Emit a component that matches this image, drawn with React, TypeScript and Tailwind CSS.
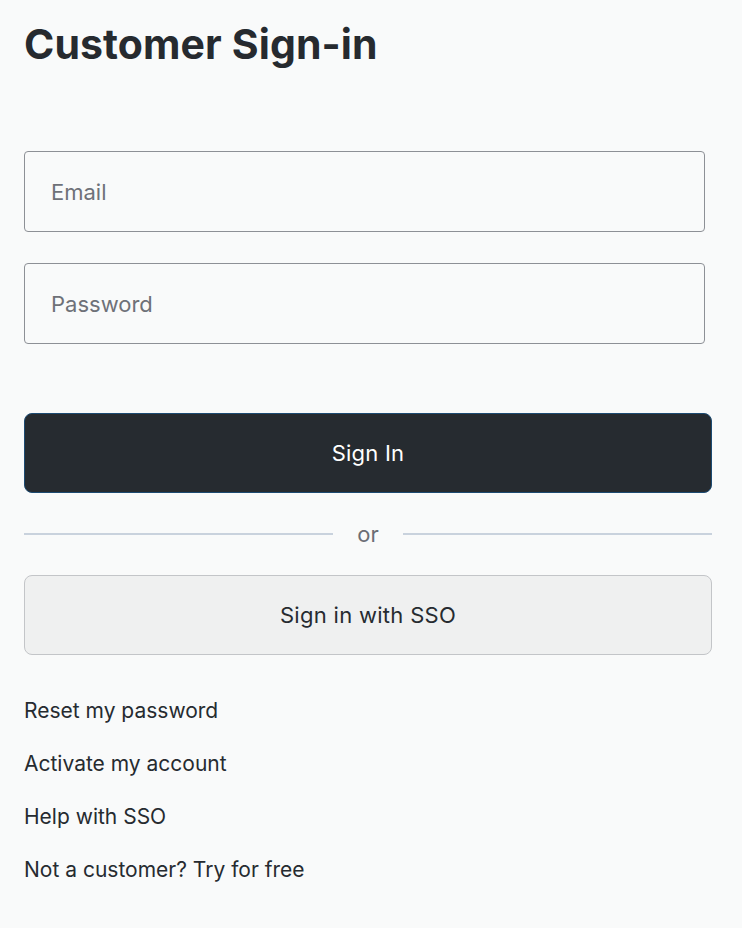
export default function App() {
  const links = [
    "Reset my password",
    "Activate my account",
    "Help with SSO",
    "Not a customer? Try for free",
  ];

  return (
    <div
      className="min-h-[928px] bg-[#f9fafa] px-6 pt-[17px] text-[#262b30]"
      style={{ fontFamily: "Inter, 'Noto Sans', sans-serif" }}
    >
      <h1 className="text-[41px] font-bold leading-[54px] tracking-[0.1px] text-[#262a2f]">
        Customer Sign-in
      </h1>

      <form className="mt-[80px] flex flex-col" onSubmit={(e) => e.preventDefault()}>
        <input
          type="email"
          placeholder="Email"
          className="h-[81px] w-[681px] rounded-[4px] border border-[#8d9096] bg-[#f9fafa] px-[26px] text-[22px] text-[#262b30] placeholder:text-[#6e7178] outline-none"
        />
        <input
          type="password"
          placeholder="Password"
          className="mt-[31px] h-[81px] w-[681px] rounded-[4px] border border-[#8d9096] bg-[#f9fafa] px-[26px] text-[22px] text-[#262b30] placeholder:text-[#6e7178] outline-none"
        />

        <button
          type="submit"
          className="mt-[69px] h-[80px] w-[688px] rounded-[8px] border border-[#1d4b72] bg-[#262b30] text-[22px] font-normal tracking-[0.2px] text-white"
        >
          Sign In
        </button>

        <div className="mt-[20px] flex h-[42px] w-[688px] items-center">
          <div className="h-[2px] flex-1 bg-[#c9d2dd]" />
          <span className="w-[70px] text-center text-[22px] text-[#6b6e75]">or</span>
          <div className="h-[2px] flex-1 bg-[#c9d2dd]" />
        </div>

        <button
          type="button"
          className="mt-[20px] h-[80px] w-[688px] rounded-[8px] border border-[#c3c5c8] bg-[#eff0f0] text-[22px] font-normal tracking-[0.3px] text-[#262b30]"
        >
          Sign in with SSO
        </button>
      </form>

      <ul className="mt-[41px] flex flex-col gap-[23px]">
        {links.map((l) => (
          <li key={l} className="h-[30px]">
            <a href="#" className="text-[21px] font-normal leading-[30px] text-[#262b30]">
              {l}
            </a>
          </li>
        ))}
      </ul>
    </div>
  );
}
